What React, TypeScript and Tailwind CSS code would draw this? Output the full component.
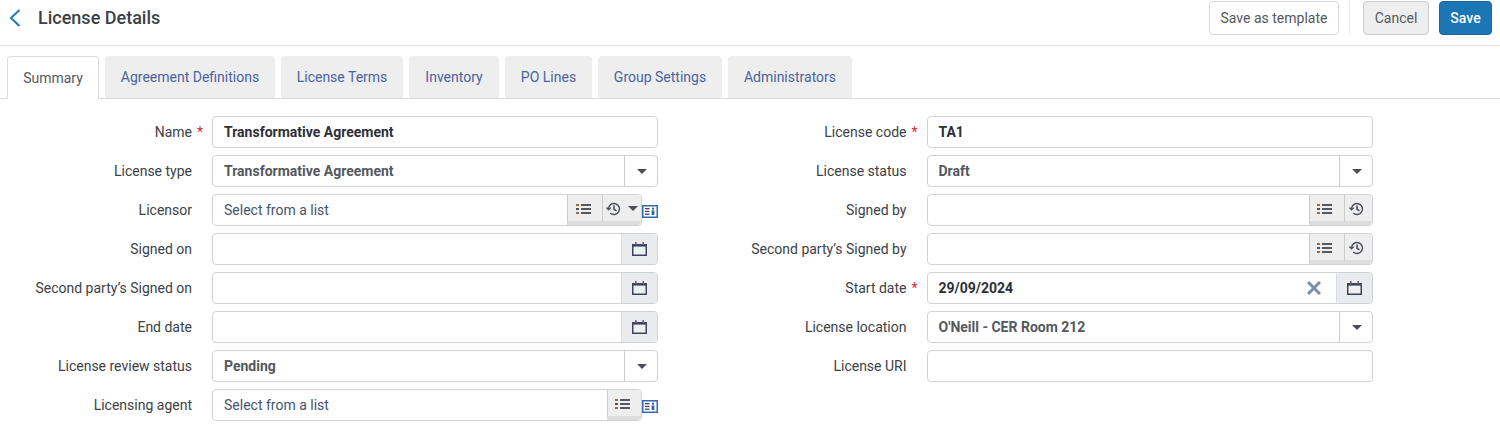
import React from "react";

const Caret = () => (
  <svg width="10" height="5" viewBox="0 0 10 5" className="shrink-0"><path d="M0 0h10L5 5z" fill="#4a4f57" /></svg>
);
const ListIcon = () => (
  <svg width="15" height="12" viewBox="0 0 15 12" className="mr-[4px]">
    <rect x="0" y="1" width="3" height="2" fill="#a0693a" />
    <rect x="0" y="5" width="3" height="2" fill="#44546a" />
    <rect x="0" y="9" width="3" height="2" fill="#a0693a" />
    <rect x="5" y="1" width="10" height="2" fill="#55585e" />
    <rect x="5" y="5" width="10" height="2" fill="#55585e" />
    <rect x="5" y="9" width="10" height="2" fill="#55585e" />
  </svg>
);
const HistoryIcon = () => (
  <svg width="15" height="14" viewBox="0 0 15 14" fill="none" stroke="#4a4f57" strokeWidth="1.4">
    <path d="M2.5 7a5.5 5.5 0 1 1 1.7 4" />
    <path d="M0.5 5.5 2.5 7.8 4.8 5.8" />
    <path d="M8 3.5V7.2L10.5 8.8" strokeWidth="1.6" />
  </svg>
);
const Calendar = () => (
  <svg width="15" height="14" viewBox="0 0 15 14">
    <rect x="0.75" y="2.75" width="13.5" height="10.5" fill="#eef0f4" stroke="#3c4658" strokeWidth="1.5" />
    <rect x="0" y="2" width="15" height="2.6" fill="#3c4658" />
    <rect x="3" y="0" width="1.6" height="3" fill="#7a5a8c" />
    <rect x="10.4" y="0" width="1.6" height="3" fill="#7a5a8c" />
  </svg>
);
const Contact = () => (
  <svg width="16" height="13" viewBox="0 0 16 13" className="shrink-0 mt-[2px]">
    <rect x="0.75" y="0.75" width="14.5" height="11.5" fill="#fff" stroke="#2f69b3" strokeWidth="1.5" />
    <rect x="3" y="3" width="4.5" height="1.3" fill="#3c4658" />
    <rect x="3" y="5.8" width="4.5" height="1.3" fill="#3c4658" />
    <rect x="3" y="8.6" width="4.5" height="1.3" fill="#3c4658" />
    <rect x="10" y="2.6" width="2" height="2" fill="#2f69b3" />
    <rect x="9.6" y="5.4" width="2.8" height="4.6" fill="#2f69b3" />
  </svg>
);

const ActionBtn = ({ children, last, cls }: { children: React.ReactNode; last?: boolean; cls?: string }) => (
  <div className={`h-full pt-[1px] flex items-center justify-center gap-[7px] bg-[#eeeeee] border-l border-[#cccccc] border-b-[4px] border-b-[#dddddd] ${last ? "rounded-r-[4px]" : ""} ${cls ?? ""}`}>
    {children}
  </div>
);

const Shell = ({ children, wide }: { children: React.ReactNode; wide?: string }) => (
  <div className={`h-8 flex items-stretch bg-white border border-[#cfd3d8] rounded-[4px] overflow-hidden ${wide ?? "w-[446px]"}`}>
    {children}
  </div>
);

const Value = ({ text, cls }: { text?: string; cls?: string }) => (
  <div className={`flex-1 min-w-0 pl-[11px] flex items-center text-[14px] ${cls ?? ""}`}>{text}</div>
);

const Text = ({ value }: { value?: string }) => (
  <Shell><Value text={value} cls="font-bold text-[#2d3036]" /></Shell>
);
const Select = ({ value }: { value: string }) => (
  <Shell>
    <Value text={value} cls="font-bold text-[#55585e]" />
    <div className="w-[33px] pl-[2px] border-l border-[#cccccc] flex items-center justify-center"><Caret /></div>
  </Shell>
);
const DateField = ({ value }: { value?: string }) => (
  <Shell>
    <Value text={value} cls="font-bold text-[#2d3036]" />
    {value && (
      <div className="w-[16px] mr-[14px] flex items-center justify-center">
        <svg width="14" height="14" viewBox="0 0 14 14" stroke="#7c8ea8" strokeWidth="3"><path d="M1 1l12 12M13 1 1 13" /></svg>
      </div>
    )}
    <div className="w-[36px] bg-[#e9ebef] border-l border-[#d8dbe0] flex items-center justify-center"><Calendar /></div>
  </Shell>
);
const Lookup = () => (
  <Shell>
    <Value />
    <div className="w-[35px]"><ActionBtn><ListIcon /></ActionBtn></div>
    <div className="w-[28px]"><ActionBtn last cls="pr-[3px]"><HistoryIcon /></ActionBtn></div>
  </Shell>
);

const Row = ({ label, req, children }: { label: string; req?: boolean; children: React.ReactNode }) => (
  <div className="h-8 flex items-center">
    <div className="relative w-[212px] pr-5 text-right text-[14px] text-[#3d4148]">
      {label}
      {req && <span className="absolute right-[9px] top-0 text-[#d9263c]">*</span>}
    </div>
    {children}
  </div>
);

const tabs = [
  ["Agreement Definitions", "w-[170px]"],
  ["License Terms", "w-[122px]"],
  ["Inventory", "w-[90px]"],
  ["PO Lines", "w-[87px]"],
  ["Group Settings", "w-[124px]"],
  ["Administrators", "w-[124px]"],
];

export default function App() {
  return (
    <div className="w-[1500px] h-[447px] bg-white overflow-hidden font-['Roboto',sans-serif]">
      <header className="h-[46px] border-b border-[#e3e3e3] flex pl-[9px] pr-2">
        <div className="flex items-center h-[35px]">
          <svg width="12" height="18" viewBox="0 0 12 18" fill="none" stroke="#1f7ab8" strokeWidth="2"><path d="M10.5 1 2 9l8.5 8" /></svg>
          <h1 className="ml-[17px] text-[18px] font-medium text-[#3b3f46]">License Details</h1>
        </div>
        <div className="ml-auto flex items-start pt-[1px] text-[14px]">
          <button className="w-[130px] h-[34px] bg-white border border-[#d9d9d9] rounded-[4px] text-[#55585e]">Save as template</button>
          <div className="w-px h-[34px] bg-[#ececec] ml-[10px] mr-[13px]" />
          <button className="w-[66px] h-[34px] bg-[#eeeeee] border border-[#cccccc] rounded-[4px] text-[#55585e]">Cancel</button>
          <button className="ml-[10px] w-[53px] h-[34px] bg-[#1a76b5] border border-[#17669c] rounded-[4px] text-white font-medium">Save</button>
        </div>
      </header>

      <nav className="mt-[10px] h-[43px] pl-[7px] flex gap-[6px] items-start border-b border-[#dddddd] text-[14px]">
        <div className="w-[92px] h-[43px] bg-white border border-b-0 border-[#dddddd] rounded-t-[4px] flex items-center justify-center text-[#55585e]">Summary</div>
        {tabs.map(([t, w]) => (
          <div key={t} className={`${w} h-[42px] bg-[#eeeeee] rounded-t-[4px] flex items-center justify-center text-[#4a64a0]`}>{t}</div>
        ))}
      </nav>

      <main className="pt-[17px] flex">
        <div className="w-[658px] flex flex-col gap-[7px]">
          <Row label="Name" req><Text value="Transformative Agreement" /></Row>
          <Row label="License type"><Select value="Transformative Agreement" /></Row>
          <Row label="Licensor">
            <Shell wide="w-[430px]">
              <Value text="Select from a list" cls="text-[#44546f]" />
              <div className="w-[35px]"><ActionBtn><ListIcon /></ActionBtn></div>
              <div className="w-[39px]"><ActionBtn last><HistoryIcon /><Caret /></ActionBtn></div>
            </Shell>
            <Contact />
          </Row>
          <Row label="Signed on"><DateField /></Row>
          <Row label="Second party’s Signed on"><DateField /></Row>
          <Row label="End date"><DateField /></Row>
          <Row label="License review status"><Select value="Pending" /></Row>
          <Row label="Licensing agent">
            <Shell wide="w-[430px]">
              <Value text="Select from a list" cls="text-[#44546f]" />
              <div className="w-[34px]"><ActionBtn last><ListIcon /></ActionBtn></div>
            </Shell>
            <Contact />
          </Row>
        </div>
        <div className="ml-[56.5px] w-[658px] flex flex-col gap-[7px]">
          <Row label="License code" req><Text value="TA1" /></Row>
          <Row label="License status"><Select value="Draft" /></Row>
          <Row label="Signed by"><Lookup /></Row>
          <Row label="Second party’s Signed by"><Lookup /></Row>
          <Row label="Start date" req><DateField value="29/09/2024" /></Row>
          <Row label="License location"><Select value="O'Neill - CER Room 212" /></Row>
          <Row label="License URI"><Text /></Row>
        </div>
      </main>
    </div>
  );
}
